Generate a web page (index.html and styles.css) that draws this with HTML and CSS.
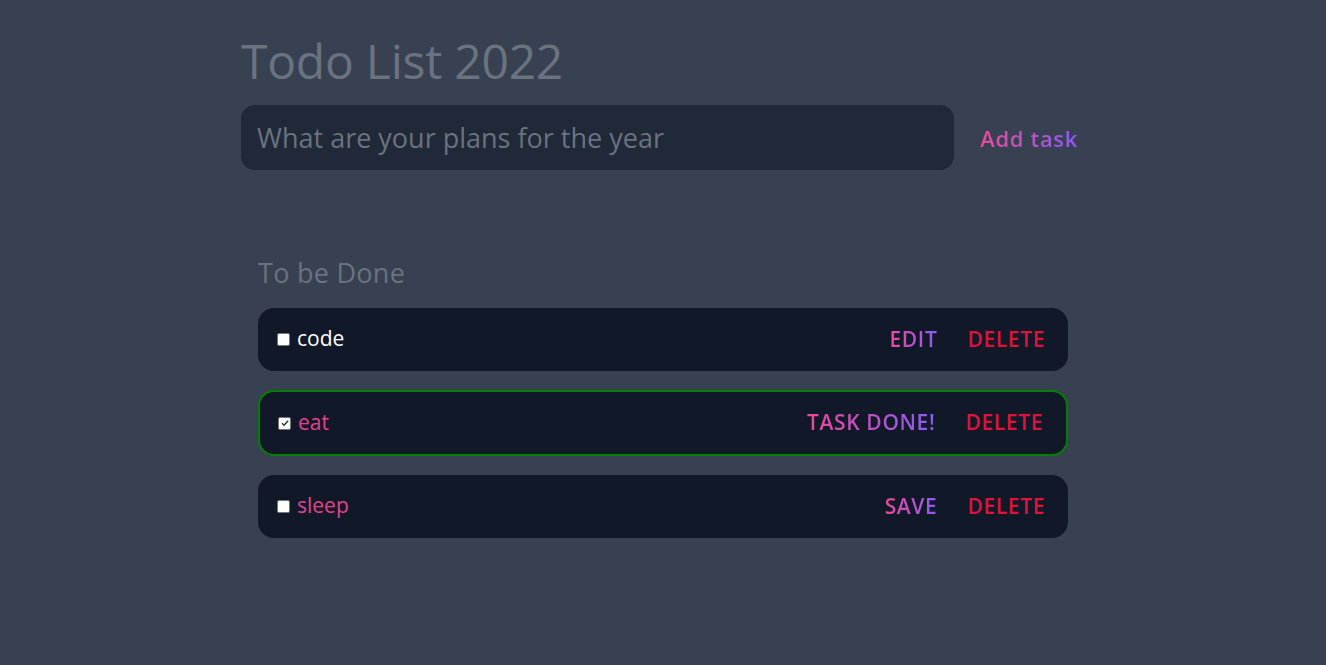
FILE: index.html
```html
<!DOCTYPE html>
<html lang="en">
<head>
<meta charset="utf-8">
<title>Todo List 2022</title>
<link rel="stylesheet" href="styles.css">
</head>
<body>
<main class="app">
  <h1 class="title">Todo List 2022</h1>
  <form class="new-task">
    <input class="new-task-input" type="text" placeholder="What are your plans for the year">
    <button class="add-btn" type="button"><span class="grad">Add task</span></button>
  </form>

  <section class="tasks">
    <h2 class="tasks-heading">To be Done</h2>
    <ul class="task-list">
      <li class="task">
        <span class="task-main">
          <span class="box"></span>
          <span class="task-text">code</span>
        </span>
        <span class="actions">
          <button class="act" type="button"><span class="grad">EDIT</span></button>
          <button class="act del" type="button">DELETE</button>
        </span>
      </li>
      <li class="task done">
        <span class="task-main">
          <span class="box">
            <svg class="tick" viewBox="0 0 10 10" width="10" height="10"><path d="M2 5.2 L4 7.2 L8.2 2.8" fill="none" stroke="#333" stroke-width="1.4"/></svg>
          </span>
          <span class="task-text pink">eat</span>
        </span>
        <span class="actions">
          <button class="act" type="button"><span class="grad">TASK DONE!</span></button>
          <button class="act del" type="button">DELETE</button>
        </span>
      </li>
      <li class="task">
        <span class="task-main">
          <span class="box"></span>
          <span class="task-text pink">sleep</span>
        </span>
        <span class="actions">
          <button class="act" type="button"><span class="grad">SAVE</span></button>
          <button class="act del" type="button">DELETE</button>
        </span>
      </li>
    </ul>
  </section>
</main>
</body>
</html>
```

FILE: styles.css
```css
* { box-sizing: border-box; }

html, body {
  margin: 0;
  padding: 0;
}

body {
  background: #374151;
  font-family: "Open Sans", "Noto Sans", Roboto, sans-serif;
  min-height: 665px;
}

.app {
  width: 844px;
  margin: 0 auto;
  padding-top: 37px;
}

.title {
  margin: 0;
  font-size: 48px;
  line-height: 48px;
  font-weight: 400;
  color: #6b7280;
  letter-spacing: -0.005em;
}

.new-task {
  display: flex;
  align-items: center;
  margin: 20px 0 0;
}

.new-task-input {
  flex: 1;
  height: 65px;
  border: none;
  outline: none;
  border-radius: 14px;
  background: #1f2937;
  padding: 0 16px;
  font-family: inherit;
  font-size: 27px;
  color: #d1d5db;
}

.new-task-input::placeholder {
  color: #6b7280;
}

.add-btn {
  margin-left: 19px;
  padding: 0 7px;
  background: none;
  border: none;
  font-family: inherit;
  font-size: 22px;
  font-weight: 600;
  letter-spacing: 0.03em;
  cursor: pointer;
}

.grad {
  background: linear-gradient(90deg, #ec4899, #8b5cf6);
  -webkit-background-clip: text;
  background-clip: text;
  color: transparent;
}

.tasks {
  margin: 85px 17px 0;
}

.tasks-heading {
  margin: 0 0 17px;
  font-size: 27px;
  line-height: 36px;
  font-weight: 400;
  color: #6b7280;
  letter-spacing: 0.01em;
}

.task-list {
  list-style: none;
  margin: 0;
  padding: 0;
  display: flex;
  flex-direction: column;
  gap: 19px;
}

.task {
  display: flex;
  align-items: center;
  justify-content: space-between;
  height: 63px;
  padding: 0 23px 0 19px;
  background: #111827;
  border-radius: 16px;
}

.task.done {
  height: 66px;
  border: 2px solid #008000;
  padding: 0 23px 0 18px;
}

.task-main {
  display: flex;
  align-items: center;
  gap: 7px;
}

.box {
  width: 13px;
  height: 13px;
  background: #fff;
  border: 1px solid #767676;
  border-radius: 2px;
  display: flex;
  align-items: center;
  justify-content: center;
}

.tick { display: block; }

.task-text {
  font-size: 21px;
  line-height: 28px;
  color: #fff;
  margin-top: -3px;
}

.task-text.pink { color: #e0448e; }

.actions {
  display: flex;
  align-items: center;
  gap: 30px;
}

.act {
  background: none;
  border: none;
  padding: 0;
  font-family: inherit;
  font-size: 21px;
  font-weight: 600;
  letter-spacing: 0.03em;
  cursor: pointer;
  margin-top: -2px;
}

.act.del { color: #dc143c; }
```
